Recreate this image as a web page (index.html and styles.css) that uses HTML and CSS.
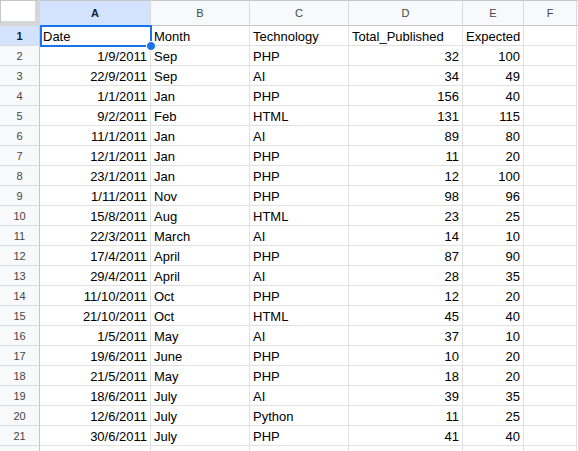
FILE: index.html
```html
<!DOCTYPE html>
<html>
<head>
<meta charset="utf-8">
<link rel="stylesheet" href="styles.css">
</head>
<body>
<div class="sheet">
  <div class="corner"></div>
  <div class="ch sel">A</div><div class="ch">B</div><div class="ch">C</div><div class="ch">D</div><div class="ch">E</div><div class="ch">F</div><div class="fill"></div>

  <div class="rh sel">1</div><div class="c a1">Date<span class="selbox"><span class="dot"></span></span></div><div class="c">Month</div><div class="c">Technology</div><div class="c">Total_Published</div><div class="c">Expected</div><div class="c"></div><div class="fill"></div>
  <div class="rh">2</div><div class="c r">1/9/2011</div><div class="c">Sep</div><div class="c">PHP</div><div class="c r">32</div><div class="c r">100</div><div class="c"></div><div class="fill"></div>
  <div class="rh">3</div><div class="c r">22/9/2011</div><div class="c">Sep</div><div class="c">AI</div><div class="c r">34</div><div class="c r">49</div><div class="c"></div><div class="fill"></div>
  <div class="rh">4</div><div class="c r">1/1/2011</div><div class="c">Jan</div><div class="c">PHP</div><div class="c r">156</div><div class="c r">40</div><div class="c"></div><div class="fill"></div>
  <div class="rh">5</div><div class="c r">9/2/2011</div><div class="c">Feb</div><div class="c">HTML</div><div class="c r">131</div><div class="c r">115</div><div class="c"></div><div class="fill"></div>
  <div class="rh">6</div><div class="c r">11/1/2011</div><div class="c">Jan</div><div class="c">AI</div><div class="c r">89</div><div class="c r">80</div><div class="c"></div><div class="fill"></div>
  <div class="rh">7</div><div class="c r">12/1/2011</div><div class="c">Jan</div><div class="c">PHP</div><div class="c r">11</div><div class="c r">20</div><div class="c"></div><div class="fill"></div>
  <div class="rh">8</div><div class="c r">23/1/2011</div><div class="c">Jan</div><div class="c">PHP</div><div class="c r">12</div><div class="c r">100</div><div class="c"></div><div class="fill"></div>
  <div class="rh">9</div><div class="c r">1/11/2011</div><div class="c">Nov</div><div class="c">PHP</div><div class="c r">98</div><div class="c r">96</div><div class="c"></div><div class="fill"></div>
  <div class="rh">10</div><div class="c r">15/8/2011</div><div class="c">Aug</div><div class="c">HTML</div><div class="c r">23</div><div class="c r">25</div><div class="c"></div><div class="fill"></div>
  <div class="rh">11</div><div class="c r">22/3/2011</div><div class="c">March</div><div class="c">AI</div><div class="c r">14</div><div class="c r">10</div><div class="c"></div><div class="fill"></div>
  <div class="rh">12</div><div class="c r">17/4/2011</div><div class="c">April</div><div class="c">PHP</div><div class="c r">87</div><div class="c r">90</div><div class="c"></div><div class="fill"></div>
  <div class="rh">13</div><div class="c r">29/4/2011</div><div class="c">April</div><div class="c">AI</div><div class="c r">28</div><div class="c r">35</div><div class="c"></div><div class="fill"></div>
  <div class="rh">14</div><div class="c r">11/10/2011</div><div class="c">Oct</div><div class="c">PHP</div><div class="c r">12</div><div class="c r">20</div><div class="c"></div><div class="fill"></div>
  <div class="rh">15</div><div class="c r">21/10/2011</div><div class="c">Oct</div><div class="c">HTML</div><div class="c r">45</div><div class="c r">40</div><div class="c"></div><div class="fill"></div>
  <div class="rh">16</div><div class="c r">1/5/2011</div><div class="c">May</div><div class="c">AI</div><div class="c r">37</div><div class="c r">10</div><div class="c"></div><div class="fill"></div>
  <div class="rh">17</div><div class="c r">19/6/2011</div><div class="c">June</div><div class="c">PHP</div><div class="c r">10</div><div class="c r">20</div><div class="c"></div><div class="fill"></div>
  <div class="rh">18</div><div class="c r">21/5/2011</div><div class="c">May</div><div class="c">PHP</div><div class="c r">18</div><div class="c r">20</div><div class="c"></div><div class="fill"></div>
  <div class="rh">19</div><div class="c r">18/6/2011</div><div class="c">July</div><div class="c">AI</div><div class="c r">39</div><div class="c r">35</div><div class="c"></div><div class="fill"></div>
  <div class="rh">20</div><div class="c r">12/6/2011</div><div class="c">July</div><div class="c">Python</div><div class="c r">11</div><div class="c r">25</div><div class="c"></div><div class="fill"></div>
  <div class="rh">21</div><div class="c r">30/6/2011</div><div class="c">July</div><div class="c">PHP</div><div class="c r">41</div><div class="c r">40</div><div class="c"></div><div class="fill"></div>
  <div class="rh"></div><div class="c"></div><div class="c"></div><div class="c"></div><div class="c"></div><div class="c"></div><div class="c"></div><div class="fill"></div>
</div>
</body>
</html>
```
FILE: styles.css
```css
html, body {
  margin: 0;
  padding: 0;
  background: #ffffff;
  overflow: hidden;
}
.sheet {
  display: grid;
  grid-template-columns: 40px 111px 99px 99px 114px 61px 53px 1fr;
  grid-auto-rows: 20px;
  grid-template-rows: 26px;
  font-family: "Liberation Sans", Arial, sans-serif;
}
.sheet > div {
  box-sizing: border-box;
}
.corner {
  background: #ffffff;
  border-top: 1px solid #c4c7c5;
  border-left: 1px solid #c4c7c5;
  border-right: 5px solid #d5d6d7;
  border-bottom: 5px solid #d5d6d7;
}
.ch {
  background: #f8f9fa;
  border-top: 1px solid #c4c7c5;
  border-right: 1px solid #dadce0;
  border-bottom: 1px solid #c4c7c5;
  color: #444746;
  font-size: 11px;
  display: flex;
  align-items: center;
  justify-content: center;
}
.ch.sel, .rh.sel {
  background: #d3e3fd;
  color: #0b1f3f;
  font-weight: bold;
}
.rh {
  background: #f8f9fa;
  border-right: 1px solid #c4c7c5;
  border-bottom: 1px solid #dadce0;
  color: #444746;
  font-size: 11px;
  display: flex;
  align-items: center;
  justify-content: center;
}
.c {
  border-right: 1px solid #e1e1e1;
  border-bottom: 1px solid #e1e1e1;
  font-size: 13px;
  line-height: 19px;
  padding: 1px 3px 0 3px;
  color: #000000;
  white-space: nowrap;
  overflow: hidden;
}
.c.r {
  text-align: right;
}
.sheet > .fill {
  border-top: 0;
}
.sheet > .fill:nth-child(8) {
  border-top: 1px solid #c4c7c5;
  border-bottom: 1px solid #c4c7c5;
  background: #f8f9fa;
}
.a1 {
  position: relative;
  overflow: visible !important;
}
.selbox {
  position: absolute;
  left: 0;
  top: -1px;
  width: 112px;
  height: 22px;
  box-sizing: border-box;
  border: 2px solid #1a73e8;
  pointer-events: none;
}
.dot {
  position: absolute;
  right: -5px;
  bottom: -5px;
  width: 8px;
  height: 8px;
  border-radius: 50%;
  background: #1a73e8;
  border: 1px solid #ffffff;
  box-sizing: content-box;
  margin: -1px;
}
```
